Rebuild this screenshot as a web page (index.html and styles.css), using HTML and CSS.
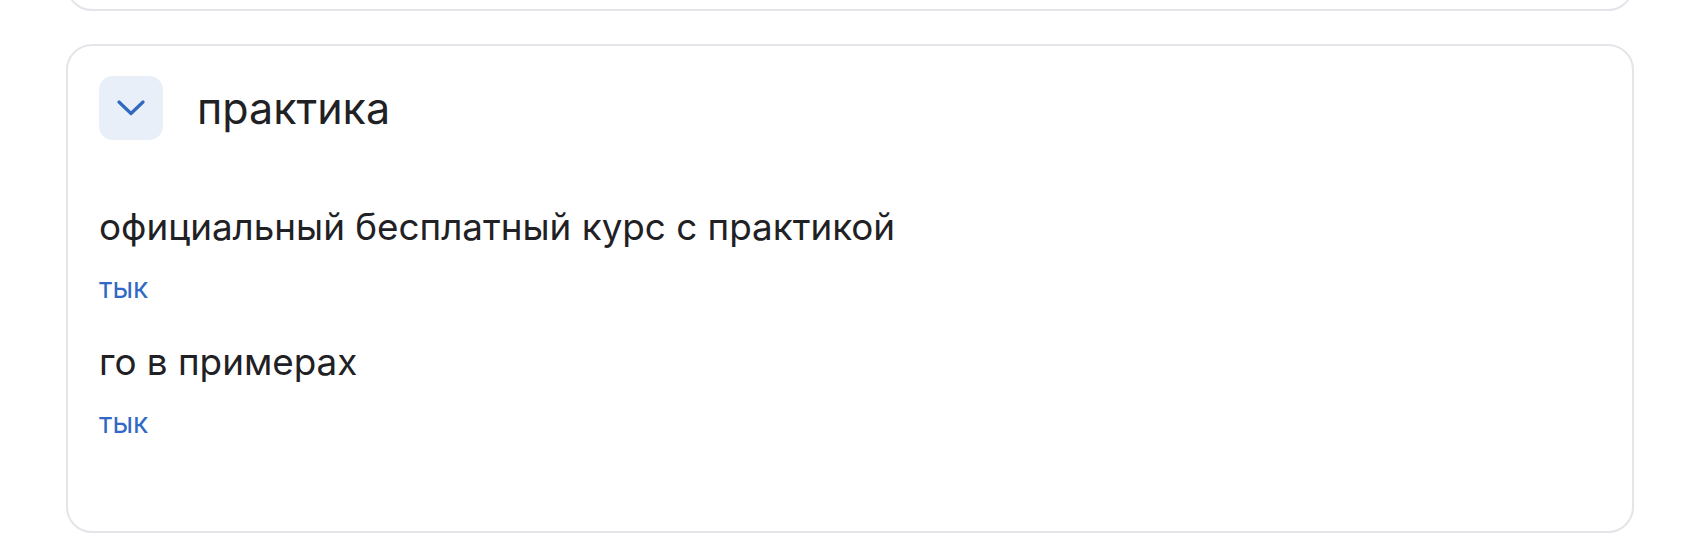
FILE: index.html
```html
<!DOCTYPE html>
<html lang="ru">
<head>
<meta charset="utf-8">
<link rel="stylesheet" href="styles.css">
</head>
<body>
<main class="page">
  <section class="card card-prev"></section>
  <section class="card">
    <header class="card-head">
      <button class="toggle" type="button" aria-label="Свернуть">
        <svg width="28" height="16" viewBox="0 0 28 16" fill="none">
          <path d="M2 2 L14 13.5 L26 2" stroke="#2f69c2" stroke-width="3.2" stroke-linecap="round" stroke-linejoin="round"/>
        </svg>
      </button>
      <h2 class="card-title">практика</h2>
    </header>
    <ul class="items">
      <li class="item">
        <h3 class="item-title">официальный бесплатный курс с практикой</h3>
        <a class="item-link" href="#">тык</a>
      </li>
      <li class="item">
        <h3 class="item-title">го в примерах</h3>
        <a class="item-link" href="#">тык</a>
      </li>
    </ul>
  </section>
</main>
</body>
</html>
```
FILE: styles.css
```css
* { box-sizing: border-box; }
html, body { margin: 0; padding: 0; background: #ffffff; }
body {
  font-family: Inter, "Noto Sans", "Liberation Sans", sans-serif;
  color: #1f2125;
}
.page {
  padding: 0 66px 0 66px;
  display: flex;
  flex-direction: column;
  gap: 33px;
}
.card {
  border: 2px solid #e3e5e9;
  border-radius: 26px;
  background: #fff;
  padding: 30px 31px 90px 31px;
}
.card-prev {
  height: 60px;
  padding: 0;
  margin-top: -49px;
}
.card-head {
  display: flex;
  align-items: center;
  gap: 34px;
}
.toggle {
  width: 64px;
  height: 64px;
  border: none;
  border-radius: 14px;
  background: #e9eff8;
  display: flex;
  align-items: center;
  justify-content: center;
  padding: 0;
  flex: none;
}
.card-title {
  margin: 0;
  font-size: 43px;
  font-weight: 400;
  line-height: 64px;
}
.items {
  list-style: none;
  margin: 0;
  padding: 63px 0 0 0;
  display: flex;
  flex-direction: column;
  gap: 32px;
}
.item {
  display: flex;
  flex-direction: column;
}
.item-title {
  margin: 0;
  font-size: 36.8px;
  font-weight: 400;
  line-height: 48px;
}
.item-link {
  margin-top: 19px;
  font-size: 28px;
  line-height: 36px;
  color: #3169c4;
  text-decoration: none;
  align-self: flex-start;
}
```
